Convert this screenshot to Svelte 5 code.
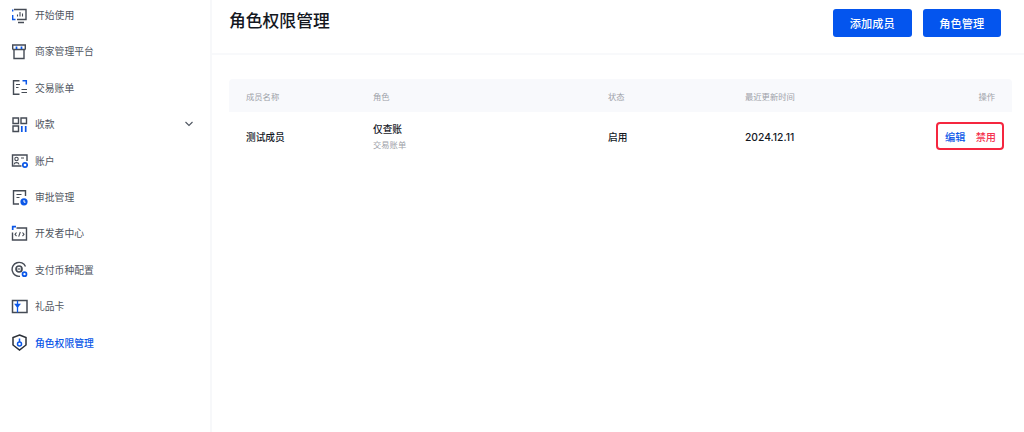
<script>
	let menu = [
		{ name: '开始使用', icon: 'start' },
		{ name: '商家管理平台', icon: 'shop' },
		{ name: '交易账单', icon: 'bill' },
		{ name: '收款', icon: 'collect', arrow: true },
		{ name: '账户', icon: 'account' },
		{ name: '审批管理', icon: 'approve' },
		{ name: '开发者中心', icon: 'dev' },
		{ name: '支付币种配置', icon: 'currency' },
		{ name: '礼品卡', icon: 'gift' },
		{ name: '角色权限管理', icon: 'role', active: true }
	];
</script>

<div class="page">
	<aside class="sidebar">
		<ul class="menu">
			{#each menu as item}
				<li class="item" class:active={item.active}>
					<svg class="icon" width="17" height="17" viewBox="0 0 17 17" fill="none" stroke="#454b55" stroke-width="1.4">
						{#if item.icon == 'start'}
							<path d="M3 2.500h12v10H6M7 15.500h6" />
							<path d="M1.700 8v4.500H4.500M1.700 4.500V2.500" stroke="#0b57e8" />
							<path d="M6.500 9.500v-2M9 9.500V5M11.500 9.500V6.500" stroke-width="1.100" />
						{:else if item.icon == 'shop'}
							<path d="M1.700 6.500V2h12.600v4.500M3 6.500v9h10v-9M1.700 6.500h12.600" />
							<path d="M5.500 3.500v2.500M10.500 3.500v2.500" stroke="#0b57e8" stroke-width="1.700" />
						{:else if item.icon == 'bill'}
							<path d="M8.500 1.700H2.500v13.600h6" />
							<path d="M11.500 1.700h3.800v3.800" stroke="#0b57e8" stroke-width="1.500" />
							<path d="M5 5.500h4M5 8.500h2.500M10.500 10.500h5.500M10.500 13.500h5.500" stroke-width="1.100" />
						{:else if item.icon == 'collect'}
							<path d="M2 2h5.500v5.500H2zM10 2h5.500v5.500H10zM2 10h5.500v5.500H2z" />
							<path d="M10.800 10v6M14.700 10v6" stroke="#0b57e8" stroke-width="1.700" />
						{:else if item.icon == 'account'}
							<path d="M10.500 14H1.500V3h14.500v6" />
							<circle cx="5.500" cy="7" r="1.700" stroke-width="1.100" />
							<path d="M3 12.500c.5-2.500 4.500-2.500 5 0M10 6h3" stroke-width="1.100" />
							<circle cx="14" cy="13" r="2.200" stroke="#0b57e8" stroke-width="1.700" />
						{:else if item.icon == 'approve'}
							<path d="M8 15H2.500V1.700h12V7" />
							<path d="M5.500 5.500h5M5.500 8.500h3" stroke-width="1.100" />
							<circle cx="13" cy="12.800" r="3.600" fill="#0b57e8" stroke="none" />
							<path d="M13 11v2.200h1.500" stroke="#fff" stroke-width="1" />
						{:else if item.icon == 'dev'}
							<path d="M5.500 3h10v12h-14V7.500" />
							<path d="M1.700 5V1.700H5" stroke="#0b57e8" stroke-width="1.700" />
							<path d="M5.500 7.500l-1.500 1.800 1.500 1.800M11.500 7.500l1.500 1.800-1.500 1.800M9.300 7l-1.600 4.600" stroke-width="1.100" />
						{:else if item.icon == 'currency'}
							<path d="M14.500 5.500A7 7 0 1 0 9 15.300" />
							<circle cx="8" cy="8" r="3" stroke-width="1.700" />
							<path d="M6.500 8h3" stroke-width="1.100" />
							<circle cx="13.500" cy="13.200" r="2" stroke="#0b57e8" stroke-width="1.700" />
						{:else if item.icon == 'gift'}
							<path d="M1.500 2.500h14.500v12H1.500z" stroke-width="1.500" />
							<path d="M6.500 2.500v12" stroke="#0b57e8" stroke-width="1.300" />
							<path d="M4.500 6.500h4l-2 2.500z" fill="#0b57e8" stroke="#0b57e8" />
						{:else if item.icon == 'role'}
							<path d="M8.500 1l6.500 2.500v7.500l-6.500 5-6.500-5V3.500z" stroke="#2b3038" stroke-width="1.500" />
							<circle cx="8.500" cy="10" r="2" stroke="#0b57e8" stroke-width="1.500" />
							<path d="M8.500 4.500v3.500" stroke="#0b57e8" stroke-width="1.500" />
						{/if}
					</svg>
					<span class="label">{item.name}</span>
					{#if item.arrow}
						<svg class="arrow" width="10" height="6" viewBox="0 0 10 6" fill="none" stroke="#4e5560" stroke-width="1.100">
							<path d="M1.500 1l3.500 3.500L8.500 1" />
						</svg>
					{/if}
				</li>
			{/each}
		</ul>
	</aside>

	<main class="content">
		<header class="top">
			<h1>角色权限管理</h1>
			<div class="buttons">
				<button>添加成员</button>
				<button>角色管理</button>
			</div>
		</header>

		<section class="table">
			<div class="row head">
				<span>成员名称</span>
				<span>角色</span>
				<span>状态</span>
				<span>最近更新时间</span>
				<span class="right">操作</span>
			</div>
			<div class="row body">
				<span class="strong">测试成员</span>
				<div class="role">
					<span class="strong">仅查账</span>
					<span class="sub">交易账单</span>
				</div>
				<span class="strong">启用</span>
				<span class="strong date">2024.12.11</span>
				<div class="ops">
					<a class="edit" href="#edit">编辑</a>
					<a class="disable" href="#disable">禁用</a>
				</div>
			</div>
		</section>
	</main>
</div>

<style>
	:global(body) {
		background: #fff;
		overflow: hidden;
	}
	.page {
		display: flex;
		width: 1024px;
		height: 432px;
		overflow: hidden;
		font-family: "Inter", "Noto Sans CJK SC", sans-serif;
		color: #14181f;
	}
	.sidebar {
		width: 210px;
		flex: none;
		border-right: 2px solid #f7f8fa;
	}
	.menu {
		list-style: none;
		margin: -3.1px 0 0 0;
		padding: 0 16px 0 11px;
	}
	.item {
		display: flex;
		align-items: center;
		height: 36.4px;
		font-size: 9.8px;
		color: #50565f;
	}
	.item.active {
		color: #0b57e8;
		font-weight: 500;
	}
	.icon {
		flex: none;
		margin-right: 7px;
	}
	.arrow {
		margin-left: auto;
	}
	.content {
		flex: 1;
		min-width: 0;
	}
	.top {
		display: flex;
		align-items: center;
		justify-content: space-between;
		height: 53px;
		padding: 0 23px 0 17px;
		border-bottom: 2px solid #f8f9fb;
	}
	h1 {
		margin: 0;
		font-size: 16.8px;
		font-weight: 500;
		margin-top: -13px;
	}
	.buttons {
		display: flex;
		gap: 11px;
		margin-top: -8px;
	}
	button {
		width: 78.5px;
		height: 28px;
		border: 0;
		border-radius: 3px;
		background: #0455ee;
		color: #fff;
		font-family: inherit;
		font-size: 11.2px;
		font-weight: 500;
		padding: 0;
	}
	.table {
		margin: 24px 12px 0 17px;
	}
	.row {
		display: grid;
		align-items: center;
		padding: 0 17px;
	}
	.row.head {
		grid-template-columns: 127px 235px 137px 1fr 60px;
		height: 33px;
		background: #f8f9fc;
		border-radius: 4px 4px 0 0;
		font-size: 8.3px;
		color: #9da1a8;
	}
	.row.body {
		grid-template-columns: 127px 235px 137px 1fr 68px;
		height: 50px;
		padding-right: 8px;
		font-size: 9.7px;
	}
	.right {
		text-align: right;
	}
	.strong {
		font-weight: 500;
	}
	.date {
		font-size: 10.3px;
	}
	.role {
		display: flex;
		flex-direction: column;
		gap: 2px;
		margin-top: -2px;
	}
	.sub {
		font-size: 8.3px;
		color: #9da1a8;
	}
	.ops {
		display: flex;
		justify-content: space-between;
		align-items: center;
		box-sizing: border-box;
		height: 28px;
		margin-top: -2px;
		padding: 1px 6px 0 7px;
		border: 2px solid #f5263f;
		border-radius: 4px;
		font-size: 10.2px;
		font-weight: 500;
	}
	.ops a {
		text-decoration: none;
	}
	.edit {
		color: #0b57e8;
	}
	.disable {
		color: #f5334f;
	}
</style>
